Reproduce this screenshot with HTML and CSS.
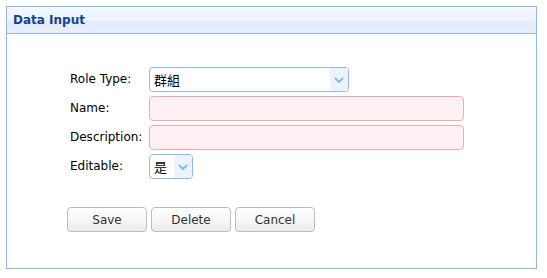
FILE: index.html
```html
<!DOCTYPE html>
<html lang="zh-Hant">
<head>
    <meta charset="UTF-8">
    <title>Data Input</title>
    <link rel="stylesheet" href="styles.css">
</head>
<body>
    <div class="panel">
        <div class="panel-header">Data Input</div>
        <div class="panel-body">
            <div class="form">
                <label>Role Type:</label>
                <div class="select wide">
                    <span class="value">群組</span>
                    <span class="trigger">
                        <svg width="10" height="6" viewBox="0 0 10 6"><path d="M1 1 L5 5 L9 1" fill="none" stroke="#7fbdee" stroke-width="2"/></svg>
                    </span>
                </div>
                <label>Name:</label>
                <div class="field invalid"></div>
                <label>Description:</label>
                <div class="field invalid"></div>
                <label>Editable:</label>
                <div class="select narrow">
                    <span class="value">是</span>
                    <span class="trigger">
                        <svg width="10" height="6" viewBox="0 0 10 6"><path d="M1 1 L5 5 L9 1" fill="none" stroke="#7fbdee" stroke-width="2"/></svg>
                    </span>
                </div>
            </div>
            <div class="buttons">
                <button class="btn">Save</button>
                <button class="btn">Delete</button>
                <button class="btn">Cancel</button>
            </div>
        </div>
    </div>
</body>
</html>
```

FILE: styles.css
```css
body { margin: 0; padding: 6px; background: #fff; font-family: "DejaVu Sans", Verdana, "Noto Sans CJK TC", sans-serif; font-size: 12px; color: #000; }
.panel { width: 531px; height: 263px; box-sizing: border-box; border: 1px solid #90b8e8; }
.panel-header { height: 26px; line-height: 26px; padding-left: 6px; border-bottom: 1px solid #90b8e8; background: linear-gradient(#f4f8ff, #eef3fd 50%, #e4ecfc 55%, #e6eefc); color: #15428b; font-weight: bold; }
.panel-body { padding: 33px 0 0 63px; }
.form { display: grid; grid-template-columns: 79px auto; row-gap: 4px; align-items: center; }
.form label { line-height: 25px; }
.select { display: flex; height: 25px; box-sizing: border-box; border: 1px solid #90b8e8; border-radius: 4px; background: #fff; overflow: hidden; }
.select.wide { width: 200px; }
.select.narrow { width: 44px; }
.select .value { flex: 1; padding-left: 4px; line-height: 23px; font-family: "Noto Sans CJK TC", sans-serif; font-size: 13px; }
.select .trigger { width: 18px; display: flex; align-items: center; justify-content: center; background: #edf2fd; }
.field { width: 315px; height: 25px; box-sizing: border-box; border: 1px solid #f4a8ac; border-radius: 4px; background: #fff0f4; }
.buttons { display: flex; gap: 4px; margin: 28px 0 0 -3px; }
.btn { width: 80px; height: 25px; padding: 0; border: 1px solid #bcbcbc; border-radius: 4px; background: linear-gradient(#fff, #f6f6f6 50%, #ececec); color: #333; font-family: "DejaVu Sans", Verdana, sans-serif; font-size: 12px; }
```
